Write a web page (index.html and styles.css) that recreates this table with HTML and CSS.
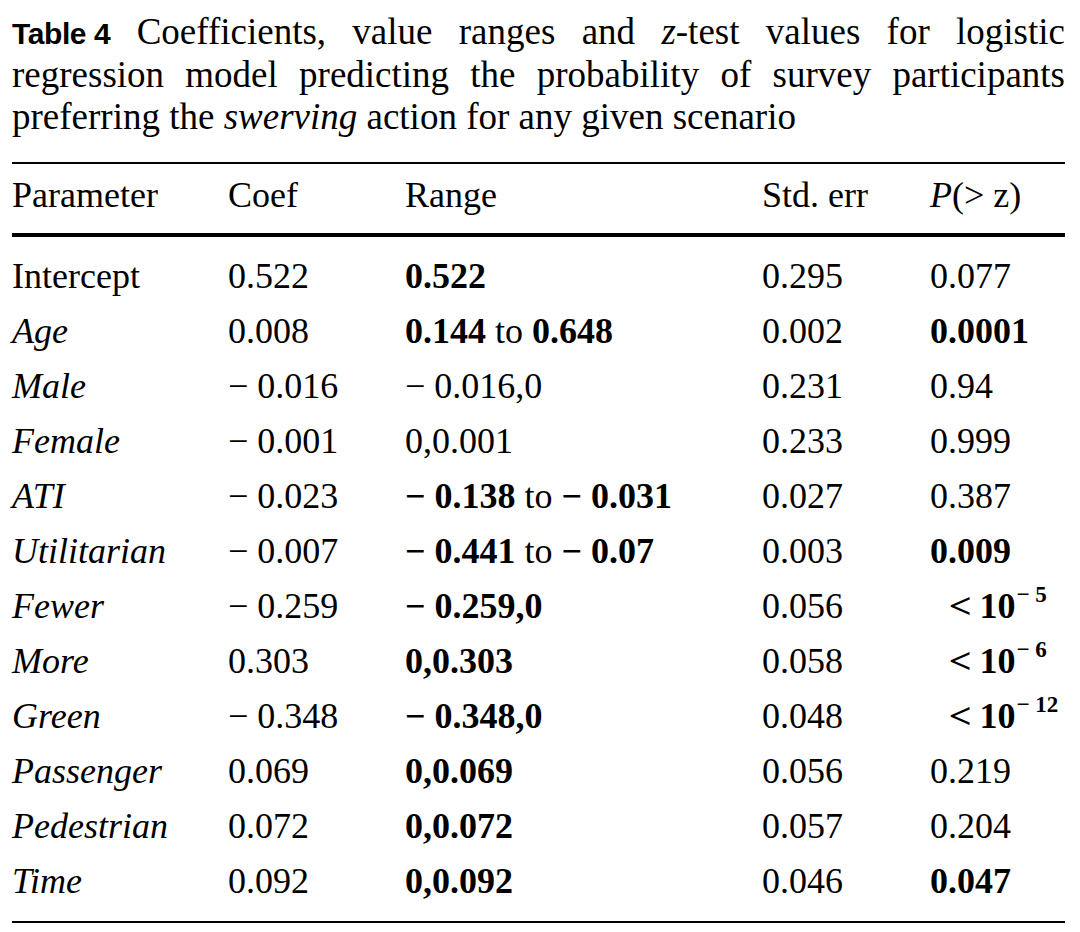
FILE: index.html
```html
<!DOCTYPE html>
<html lang="en">
<head>
<meta charset="utf-8">
<title>Table 4</title>
<link rel="stylesheet" href="styles.css">
</head>
<body>
<figure class="table-figure">
  <p class="caption"><span class="label">Table 4</span> Coefficients, value ranges and <i>z</i>-test values for logistic regression model predicting the probability of survey participants preferring the <i>swerving</i> action for any given scenario</p>
  <table class="data">
    <colgroup>
      <col class="c-param">
      <col class="c-coef">
      <col class="c-range">
      <col class="c-err">
      <col class="c-p">
    </colgroup>
    <thead>
      <tr><th>Parameter</th><th>Coef</th><th>Range</th><th>Std. err</th><th><i>P</i>(&gt; z)</th></tr>
    </thead>
    <tbody>
      <tr><td>Intercept</td><td>0.522</td><td><b>0.522</b></td><td>0.295</td><td>0.077</td></tr>
      <tr><td><i>Age</i></td><td>0.008</td><td><b>0.144</b> to <b>0.648</b></td><td>0.002</td><td><b>0.0001</b></td></tr>
      <tr><td><i>Male</i></td><td>− 0.016</td><td>− 0.016,0</td><td>0.231</td><td>0.94</td></tr>
      <tr><td><i>Female</i></td><td>− 0.001</td><td>0,0.001</td><td>0.233</td><td>0.999</td></tr>
      <tr><td><i>ATI</i></td><td>− 0.023</td><td><b>− 0.138</b> to <b>− 0.031</b></td><td>0.027</td><td>0.387</td></tr>
      <tr><td><i>Utilitarian</i></td><td>− 0.007</td><td><b>− 0.441</b> to <b>− 0.07</b></td><td>0.003</td><td><b>0.009</b></td></tr>
      <tr><td><i>Fewer</i></td><td>− 0.259</td><td><b>− 0.259,0</b></td><td>0.056</td><td><b class="lt">&lt;</b><b>10<sup class="exp">− 5</sup></b></td></tr>
      <tr><td><i>More</i></td><td>0.303</td><td><b>0,0.303</b></td><td>0.058</td><td><b class="lt">&lt;</b><b>10<sup class="exp">− 6</sup></b></td></tr>
      <tr><td><i>Green</i></td><td>− 0.348</td><td><b>− 0.348,0</b></td><td>0.048</td><td><b class="lt">&lt;</b><b>10<sup class="exp">− 12</sup></b></td></tr>
      <tr><td><i>Passenger</i></td><td>0.069</td><td><b>0,0.069</b></td><td>0.056</td><td>0.219</td></tr>
      <tr><td><i>Pedestrian</i></td><td>0.072</td><td><b>0,0.072</b></td><td>0.057</td><td>0.204</td></tr>
      <tr><td><i>Time</i></td><td>0.092</td><td><b>0,0.092</b></td><td>0.046</td><td><b>0.047</b></td></tr>
    </tbody>
  </table>
</figure>
</body>
</html>
```

FILE: styles.css
```css
html, body {
  margin: 0;
  padding: 0;
  background: #ffffff;
  color: #000000;
}

.table-figure {
  margin: 0;
  padding: 11px 0 0 12px;
  width: 1053px;
  font-family: "Liberation Serif", "Times New Roman", serif;
}

.caption {
  margin: 0 0 23px 0;
  font-size: 37px;
  line-height: 42.5px;
  text-align: justify;
}

.caption .label {
  display: inline-block;
  font-family: "Liberation Sans", Arial, sans-serif;
  font-weight: 700;
  font-size: 30px;
  line-height: 30px;
  letter-spacing: -0.4px;
}

.data {
  width: 1053px;
  table-layout: fixed;
  border-collapse: separate;
  border-spacing: 0;
  border-top: 2px solid #000;
  border-bottom: 2px solid #000;
  font-size: 36px;
}

.c-param { width: 216px; }
.c-coef { width: 177px; }
.c-range { width: 357px; }
.c-err { width: 168px; }
.c-p { width: 135px; }

.data th,
.data td {
  padding: 0;
  text-align: left;
  white-space: nowrap;
  line-height: 55px;
  vertical-align: baseline;
}

.data th {
  font-weight: 400;
  padding-top: 4px;
  padding-bottom: 10px;
  border-bottom: 4px solid #000;
}

.data tbody tr:first-child td {
  padding-top: 12px;
}

.data tbody tr:last-child td {
  padding-bottom: 12px;
}

.lt {
  display: inline-block;
  margin-left: 20px;
  margin-right: 9px;
  transform: scaleX(1.12);
}

.exp {
  font-size: 23px;
  line-height: 0;
  vertical-align: 16px;
  margin-left: 1px;
}
```
